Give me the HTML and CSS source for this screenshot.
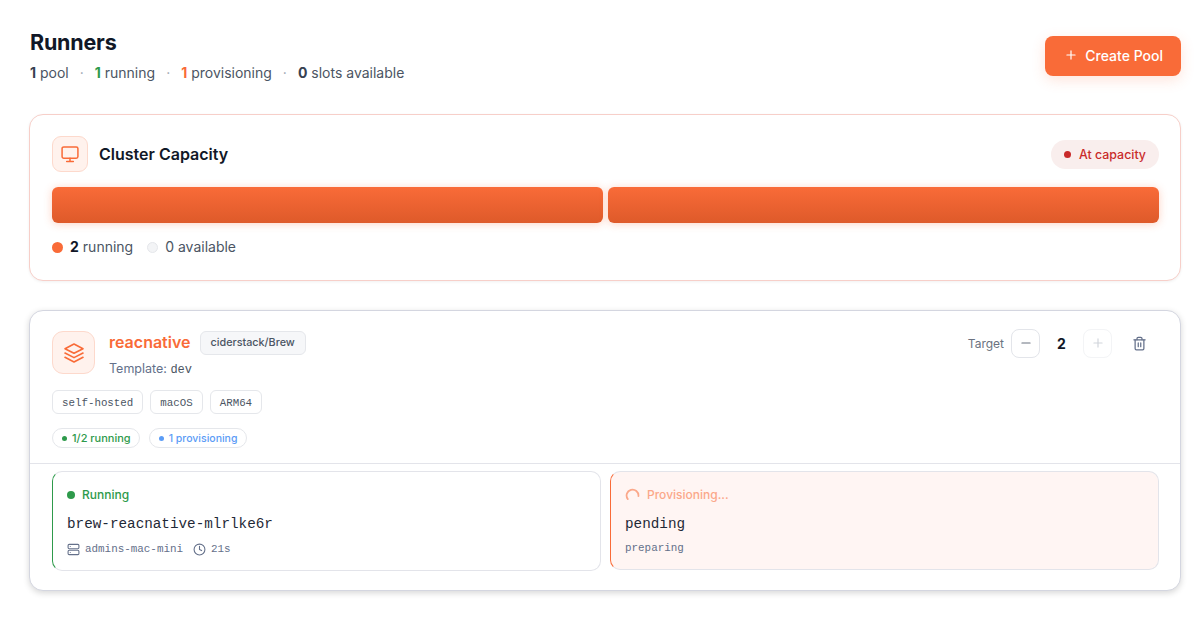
FILE: index.html
```html
<!DOCTYPE html>
<html>
<head>
    <title>Runners</title>
    <link rel="stylesheet" href="styles.css">
</head>
<body>
    <div class="page">
        <div class="page-header">
            <div>
                <h1>Runners</h1>
                <div class="summary">
                    <span><b>1</b> pool</span><i>·</i>
                    <span><b class="green">1</b> running</span><i>·</i>
                    <span><b class="orange">1</b> provisioning</span><i>·</i>
                    <span><b>0</b> slots available</span>
                </div>
            </div>
            <button class="create-btn">
                <svg width="14" height="14" viewBox="0 0 24 24" fill="none" stroke="currentColor" stroke-width="2" stroke-linecap="round"><path d="M5 12h14M12 5v14"/></svg>
                Create Pool
            </button>
        </div>

        <div class="card capacity">
            <div class="capacity-head">
                <div class="icon-box small">
                    <svg width="20" height="20" viewBox="0 0 24 24" fill="none" stroke="currentColor" stroke-width="1.8" stroke-linecap="round" stroke-linejoin="round"><rect x="2.5" y="3.5" width="19" height="13.5" rx="2"/><path d="M8 21h8M12 17v4"/></svg>
                </div>
                <h2>Cluster Capacity</h2>
                <div class="capacity-badge"><span class="dot"></span>At capacity</div>
            </div>
            <div class="bars">
                <div class="bar"></div>
                <div class="bar"></div>
            </div>
            <div class="legend">
                <span class="legend-item"><span class="legend-dot on"></span><b>2</b> running</span>
                <span class="legend-item"><span class="legend-dot off"></span>0 available</span>
            </div>
        </div>

        <div class="card pool">
            <div class="pool-top">
                <div class="pool-head">
                    <div class="icon-box large">
                        <svg width="24" height="24" viewBox="0 0 24 24" fill="none" stroke="currentColor" stroke-width="1.6" stroke-linecap="round" stroke-linejoin="round"><path d="M12 3 3 7.7l9 4.6 9-4.6L12 3z"/><path d="m3 12 9 4.6 9-4.6"/><path d="m3 16.3 9 4.7 9-4.7"/></svg>
                    </div>
                    <div class="pool-title">
                        <div class="pool-name-row">
                            <span class="pool-name">reacnative</span>
                            <span class="repo-tag">ciderstack/Brew</span>
                        </div>
                        <div class="pool-template">Template: <span>dev</span></div>
                    </div>
                    <div class="target">
                        <span class="target-label">Target</span>
                        <button class="step-btn">
                            <svg width="14" height="14" viewBox="0 0 24 24" fill="none" stroke="currentColor" stroke-width="2" stroke-linecap="round"><path d="M5 12h14"/></svg>
                        </button>
                        <span class="target-value">2</span>
                        <button class="step-btn disabled">
                            <svg width="14" height="14" viewBox="0 0 24 24" fill="none" stroke="currentColor" stroke-width="2" stroke-linecap="round"><path d="M5 12h14M12 5v14"/></svg>
                        </button>
                        <button class="trash-btn">
                            <svg width="15" height="15" viewBox="0 0 24 24" fill="none" stroke="currentColor" stroke-width="2" stroke-linecap="round" stroke-linejoin="round"><path d="M3 6h18"/><path d="M19 6v14a2 2 0 0 1-2 2H7a2 2 0 0 1-2-2V6"/><path d="M8 6V4a2 2 0 0 1 2-2h4a2 2 0 0 1 2 2v2"/><path d="M10 11v6M14 11v6"/></svg>
                        </button>
                    </div>
                </div>
                <div class="labels">
                    <span class="label">self-hosted</span>
                    <span class="label">macOS</span>
                    <span class="label">ARM64</span>
                </div>
                <div class="pills">
                    <span class="pill green"><span class="pill-dot"></span>1/2 running</span>
                    <span class="pill blue"><span class="pill-dot"></span>1 provisioning</span>
                </div>
            </div>
            <div class="runners">
                <div class="runner running">
                    <div class="runner-status"><span class="status-dot"></span>Running</div>
                    <div class="runner-name">brew-reacnative-mlrlke6r</div>
                    <div class="runner-meta">
                        <svg width="13" height="13" viewBox="0 0 24 24" fill="none" stroke="currentColor" stroke-width="2" stroke-linecap="round" stroke-linejoin="round"><rect x="2" y="2.5" width="20" height="8" rx="2"/><rect x="2" y="13.5" width="20" height="8" rx="2"/><path d="M6 6.5h.01M6 17.5h.01"/></svg>
                        <span>admins-mac-mini</span>
                        <svg class="clock" width="13" height="13" viewBox="0 0 24 24" fill="none" stroke="currentColor" stroke-width="2" stroke-linecap="round" stroke-linejoin="round"><circle cx="12" cy="12" r="10"/><path d="M12 6v6l4 2"/></svg>
                        <span>21s</span>
                    </div>
                </div>
                <div class="runner provisioning">
                    <div class="runner-status">
                        <svg width="15" height="15" viewBox="0 0 24 24" fill="none" stroke="currentColor" stroke-width="2.8" stroke-linecap="round"><path d="M4.5 17.8A9.5 9.5 0 1 1 21.5 13"/></svg>
                        Provisioning...
                    </div>
                    <div class="runner-name">pending</div>
                    <div class="runner-meta">preparing</div>
                </div>
            </div>
        </div>
    </div>
</body>
</html>
```

FILE: styles.css
```css
* {
    box-sizing: border-box;
}
body {
    margin: 0;
    background: #fff;
    color: #111827;
    font-family: Inter, "Noto Sans", sans-serif;
}
.page {
    padding: 30px 20px 20px 29px;
}
.page-header {
    display: flex;
    justify-content: space-between;
    align-items: flex-start;
    padding-left: 1px;
    margin-bottom: 31px;
}
h1 {
    margin: 0;
    font-size: 21.5px;
    line-height: 24px;
    font-weight: 700;
    letter-spacing: -0.2px;
}
.summary {
    margin-top: 9px;
    font-size: 14px;
    line-height: 20px;
    color: #4b5563;
    display: flex;
    gap: 11px;
}
.summary b {
    font-weight: 700;
    color: #374151;
}
.summary b.green {
    color: #2e9a4b;
}
.summary b.orange {
    color: #f96b38;
}
.summary i {
    font-style: normal;
    color: #9ca3af;
}
.create-btn {
    display: flex;
    align-items: center;
    gap: 7px;
    height: 40px;
    margin-top: 6px;
    padding: 0 18px 2px 19px;
    border: none;
    border-radius: 8px;
    background: #f96b38;
    color: #fff;
    font-family: inherit;
    font-size: 14px;
    font-weight: 500;
    box-shadow: 0 4px 14px rgba(249, 107, 56, 0.18);
}

.card {
    background: #fff;
    border-radius: 14px;
    border: 1px solid #d4d6e0;
}
.capacity {
    height: 167px;
    padding: 21px 21px 21px 22px;
    border-color: #f7cfc9;
    box-shadow: 0 1px 3px rgba(0, 0, 0, 0.06);
    margin-bottom: 29px;
}
.capacity-head {
    display: flex;
    align-items: center;
    gap: 11px;
}
.capacity-head h2 {
    margin: 0;
    font-size: 16px;
    font-weight: 600;
}
.icon-box {
    display: flex;
    align-items: center;
    justify-content: center;
    background: #fff2ed;
    border: 1px solid #fdd9cc;
    color: #f96b38;
}
.icon-box.small {
    width: 36px;
    height: 36px;
    border-radius: 9px;
}
.icon-box.large {
    width: 43px;
    height: 43px;
    border-radius: 11px;
    flex-shrink: 0;
}
.capacity-badge {
    margin-left: auto;
    display: flex;
    align-items: center;
    gap: 8px;
    height: 29px;
    padding: 0 13px;
    border-radius: 15px;
    background: #f9eeed;
    color: #c92a2a;
    font-size: 12.4px;
    font-weight: 500;
}
.capacity-badge .dot {
    width: 7px;
    height: 7px;
    border-radius: 50%;
    background: #c92a2a;
}
.bars {
    display: flex;
    gap: 5px;
    margin-top: 15px;
}
.bar {
    flex: 1;
    height: 36px;
    border-radius: 6px;
    background: linear-gradient(180deg, #f96b38, #de5a2a);
    box-shadow: 0 1px 8px rgba(249, 107, 56, 0.3);
}
.legend {
    display: flex;
    gap: 14px;
    margin-top: 14px;
    font-size: 14px;
    line-height: 20px;
    color: #4b5563;
}
.legend-item {
    display: flex;
    align-items: center;
}
.legend-item b {
    color: #111827;
    font-weight: 700;
    margin-right: 4px;
}
.legend-dot {
    width: 11px;
    height: 11px;
    border-radius: 50%;
    margin-right: 7px;
}
.legend-dot.on {
    background: #f96b38;
}
.legend-dot.off {
    background: #f3f4f6;
    border: 1px solid #e5e7eb;
}

.pool {
    height: 281px;
    box-shadow: 0 2px 6px rgba(0, 0, 0, 0.16);
}
.pool-top {
    height: 153px;
    padding: 19px 22px 0;
    border-bottom: 1px solid #e3e4ea;
}
.pool-head {
    display: flex;
    align-items: flex-start;
    gap: 14px;
    padding-top: 1px;
}
.pool-name-row {
    display: flex;
    align-items: center;
    gap: 9px;
    margin-top: -2px;
}
.pool-name {
    color: #f96b38;
    font-size: 16px;
    font-weight: 600;
}
.repo-tag {
    height: 24px;
    line-height: 22px;
    margin-top: 2px;
    padding: 0 10px;
    border: 1px solid #e5e7eb;
    border-radius: 6px;
    background: #f6f7f9;
    color: #4b5563;
    font-size: 10.8px;
    font-weight: 500;
}
.pool-template {
    margin-top: 6px;
    font-size: 12.5px;
    line-height: 16px;
    color: #64708a;
}
.pool-template span {
    color: #4b5563;
    font-size: 12px;
    font-family: "Liberation Mono", monospace;
}
.target {
    margin-left: auto;
    margin-top: -2px;
    display: flex;
    align-items: center;
    padding-right: 4px;
    height: 28px;
}
.target-label {
    font-size: 12px;
    color: #6b7280;
    margin-right: 7px;
}
.target-value {
    width: 43px;
    text-align: center;
    font-size: 14px;
    font-weight: 700;
}
.step-btn {
    display: flex;
    align-items: center;
    justify-content: center;
    width: 29px;
    height: 29px;
    padding: 0;
    background: #fff;
    border: 1px solid #e3e5ea;
    border-radius: 8px;
    color: #6b7280;
}
.step-btn.disabled {
    border-color: #f3f4f6;
    color: #d1d5db;
}
.trash-btn {
    display: flex;
    align-items: center;
    justify-content: center;
    width: 29px;
    height: 29px;
    margin-left: 13px;
    padding: 0;
    border: none;
    background: none;
    color: #64708a;
}
.labels {
    display: flex;
    gap: 7px;
    margin-top: 12px;
}
.label {
    height: 24px;
    line-height: 24px;
    padding: 0 9px;
    border: 1px solid #e5e7eb;
    border-radius: 6px;
    font-family: "Liberation Mono", monospace;
    font-size: 10.8px;
    color: #4b5563;
}
.pills {
    display: flex;
    gap: 9px;
    margin-top: 14px;
}
.pill {
    display: flex;
    align-items: center;
    gap: 5px;
    height: 20px;
    padding: 0 8px 0 9px;
    border: 1px solid #e5e7eb;
    border-radius: 10px;
    font-size: 11px;
    font-weight: 500;
}
.pill-dot {
    width: 5px;
    height: 5px;
    border-radius: 50%;
    background: currentColor;
}
.pill.green {
    color: #2e9a4b;
}
.pill.blue {
    padding-right: 9px;
    font-size: 10.5px;
    color: #5b9cf6;
}
.runners {
    display: flex;
    gap: 9px;
    padding: 7px 21px 0 22px;
}
.runner {
    flex: 1;
    padding: 15px 14px 0;
    border: 1px solid #e3e4ea;
    border-radius: 10px;
}
.runner.running {
    height: 100px;
    border-left: 1.5px solid #2e9a4b;
}
.runner.provisioning {
    height: 99px;
    background: #fff5f3;
    border-left: 1.5px solid #f96b38;
}
.runner-status {
    display: flex;
    align-items: center;
    gap: 7px;
    font-size: 12px;
    line-height: 16px;
    font-weight: 500;
}
.running .runner-status {
    color: #2e9a4b;
}
.provisioning .runner-status {
    color: #fba88a;
}
.status-dot {
    width: 8px;
    height: 8px;
    border-radius: 50%;
    background: #2e9a4b;
}
.runner-name {
    margin-top: 12px;
    font-family: "Liberation Mono", monospace;
    font-size: 14.3px;
    line-height: 18px;
    color: #1f2937;
}
.runner-meta {
    display: flex;
    align-items: center;
    gap: 5px;
    margin-top: 9px;
    font-family: "Liberation Mono", monospace;
    font-size: 10.9px;
    line-height: 14px;
    color: #64708a;
}
.provisioning .runner-meta {
    margin-top: 8px;
}
.clock {
    margin-left: 5px;
}
```
